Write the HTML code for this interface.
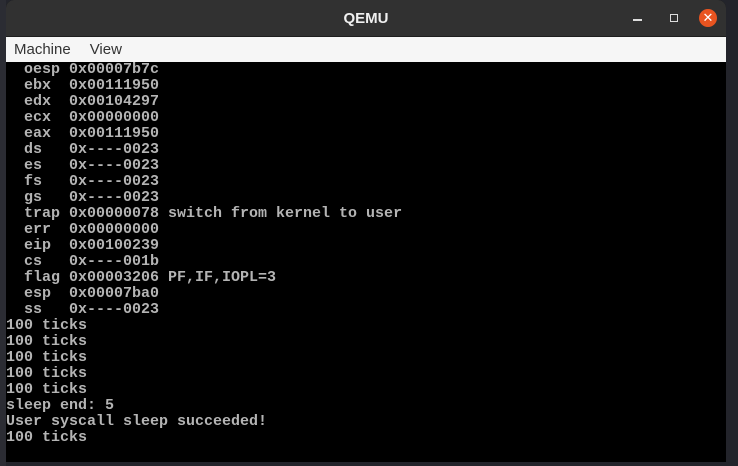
<!DOCTYPE html>
<html><head><style>
body{margin:0;width:738px;height:466px;background:#23242b;position:relative;overflow:hidden;font-family:"Liberation Sans",sans-serif}
#strip{position:absolute;left:0;top:0;width:6px;height:466px;background:#2b2c33}
#win{position:absolute;left:6px;top:0;width:720px;height:462px;background:#000;border-radius:8px 8px 0 0;overflow:hidden}
#title{height:36px;background:#313131;color:#f0f0f0;font-weight:bold;font-size:15px;text-align:center;line-height:37px;border-bottom:1px solid #1e1e1e;position:relative}
#menu{height:25px;background:#f6f6f6;font-size:15px;color:#333;line-height:26px}
#menu span{margin-left:8px;margin-right:11px}
pre{margin:0;font-family:"Liberation Mono",monospace;font-size:15px;line-height:16px;color:#b4b4b4;font-weight:bold;letter-spacing:0}
.min{position:absolute;left:627px;top:19px;width:9px;height:1.5px;background:#ddd}
.max{position:absolute;left:664px;top:14px;width:6px;height:6px;border:1.5px solid #ddd}
.cls{position:absolute;left:693px;top:9px;width:18px;height:18px;border-radius:50%;background:#e95420;color:#fff;font-size:13px;line-height:18px;text-align:center;font-weight:normal}
</style></head><body>
<div id="strip"></div>
<div id="win">
<div id="title">QEMU<div class="min"></div><div class="max"></div><div class="cls">✕</div></div>
<div id="menu"><span>Machine</span><span>View</span></div>
<pre>  oesp 0x00007b7c
  ebx  0x00111950
  edx  0x00104297
  ecx  0x00000000
  eax  0x00111950
  ds   0x----0023
  es   0x----0023
  fs   0x----0023
  gs   0x----0023
  trap 0x00000078 switch from kernel to user
  err  0x00000000
  eip  0x00100239
  cs   0x----001b
  flag 0x00003206 PF,IF,IOPL=3
  esp  0x00007ba0
  ss   0x----0023
100 ticks
100 ticks
100 ticks
100 ticks
100 ticks
sleep end: 5
User syscall sleep succeeded!
100 ticks</pre>
</div>
</body></html>
